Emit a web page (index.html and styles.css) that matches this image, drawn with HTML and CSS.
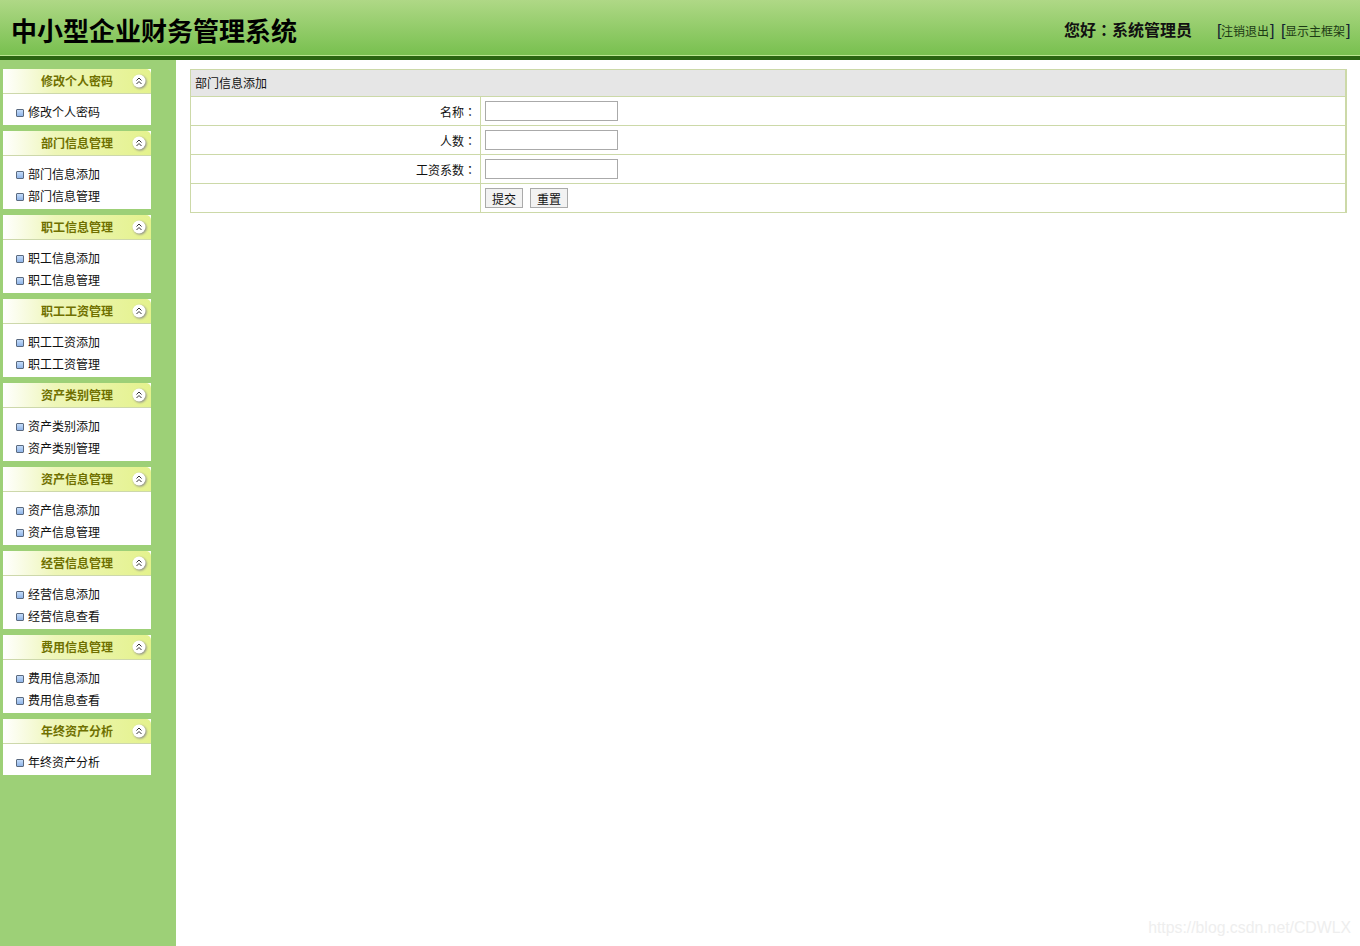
FILE: index.html
```html
<!DOCTYPE html>
<html lang="zh-CN">
<head>
<meta charset="utf-8">
<title>中小型企业财务管理系统</title>
<link rel="stylesheet" href="styles.css">
</head>
<body>
<header class="top">
  <h1 class="title">中小型企业财务管理系统</h1>
  <div class="greet">您好<span class="colon" lang="zh-TW">：</span>系统管理员</div>
  <div class="links"><span class="br">[</span><a>注销退出</a><span class="br br-end">]</span><span class="br br-gap">[</span><a>显示主框架</a><span class="br br-end">]</span></div>
</header>
<div class="main">
  <aside class="side">
    <section class="panel"><div class="phead"><span class="ptitle">修改个人密码</span><svg class="tog" viewBox="0 0 14 14"><circle cx="7" cy="7" r="6.500" fill="#fff"/><path d="M4.500 6.500 7 4l2.500 2.500M4.500 10 7 7.500l2.500 2.500" fill="none" stroke="#333" stroke-width="1"/></svg></div><ul class="pbody"><li>修改个人密码</li></ul></section>
    <section class="panel"><div class="phead"><span class="ptitle">部门信息管理</span><svg class="tog" viewBox="0 0 14 14"><circle cx="7" cy="7" r="6.500" fill="#fff"/><path d="M4.500 6.500 7 4l2.500 2.500M4.500 10 7 7.500l2.500 2.500" fill="none" stroke="#333" stroke-width="1"/></svg></div><ul class="pbody"><li>部门信息添加</li><li>部门信息管理</li></ul></section>
    <section class="panel"><div class="phead"><span class="ptitle">职工信息管理</span><svg class="tog" viewBox="0 0 14 14"><circle cx="7" cy="7" r="6.500" fill="#fff"/><path d="M4.500 6.500 7 4l2.500 2.500M4.500 10 7 7.500l2.500 2.500" fill="none" stroke="#333" stroke-width="1"/></svg></div><ul class="pbody"><li>职工信息添加</li><li>职工信息管理</li></ul></section>
    <section class="panel"><div class="phead"><span class="ptitle">职工工资管理</span><svg class="tog" viewBox="0 0 14 14"><circle cx="7" cy="7" r="6.500" fill="#fff"/><path d="M4.500 6.500 7 4l2.500 2.500M4.500 10 7 7.500l2.500 2.500" fill="none" stroke="#333" stroke-width="1"/></svg></div><ul class="pbody"><li>职工工资添加</li><li>职工工资管理</li></ul></section>
    <section class="panel"><div class="phead"><span class="ptitle">资产类别管理</span><svg class="tog" viewBox="0 0 14 14"><circle cx="7" cy="7" r="6.500" fill="#fff"/><path d="M4.500 6.500 7 4l2.500 2.500M4.500 10 7 7.500l2.500 2.500" fill="none" stroke="#333" stroke-width="1"/></svg></div><ul class="pbody"><li>资产类别添加</li><li>资产类别管理</li></ul></section>
    <section class="panel"><div class="phead"><span class="ptitle">资产信息管理</span><svg class="tog" viewBox="0 0 14 14"><circle cx="7" cy="7" r="6.500" fill="#fff"/><path d="M4.500 6.500 7 4l2.500 2.500M4.500 10 7 7.500l2.500 2.500" fill="none" stroke="#333" stroke-width="1"/></svg></div><ul class="pbody"><li>资产信息添加</li><li>资产信息管理</li></ul></section>
    <section class="panel"><div class="phead"><span class="ptitle">经营信息管理</span><svg class="tog" viewBox="0 0 14 14"><circle cx="7" cy="7" r="6.500" fill="#fff"/><path d="M4.500 6.500 7 4l2.500 2.500M4.500 10 7 7.500l2.500 2.500" fill="none" stroke="#333" stroke-width="1"/></svg></div><ul class="pbody"><li>经营信息添加</li><li>经营信息查看</li></ul></section>
    <section class="panel"><div class="phead"><span class="ptitle">费用信息管理</span><svg class="tog" viewBox="0 0 14 14"><circle cx="7" cy="7" r="6.500" fill="#fff"/><path d="M4.500 6.500 7 4l2.500 2.500M4.500 10 7 7.500l2.500 2.500" fill="none" stroke="#333" stroke-width="1"/></svg></div><ul class="pbody"><li>费用信息添加</li><li>费用信息查看</li></ul></section>
    <section class="panel"><div class="phead"><span class="ptitle">年终资产分析</span><svg class="tog" viewBox="0 0 14 14"><circle cx="7" cy="7" r="6.500" fill="#fff"/><path d="M4.500 6.500 7 4l2.500 2.500M4.500 10 7 7.500l2.500 2.500" fill="none" stroke="#333" stroke-width="1"/></svg></div><ul class="pbody"><li>年终资产分析</li></ul></section>
  </aside>
  <main class="content">
    <div class="form">
      <div class="fhead">部门信息添加</div>
      <div class="row"><div class="lab">名称<span class="colon" lang="zh-TW">：</span></div><div class="val"><span class="inp"></span></div></div>
      <div class="row"><div class="lab">人数<span class="colon" lang="zh-TW">：</span></div><div class="val"><span class="inp"></span></div></div>
      <div class="row"><div class="lab">工资系数<span class="colon" lang="zh-TW">：</span></div><div class="val"><span class="inp"></span></div></div>
      <div class="row"><div class="lab"></div><div class="val"><span class="btn">提交</span><span class="btn">重置</span></div></div>
    </div>
  </main>
</div>
<div class="mark">https://blog.csdn.net/CDWLX</div>
</body>
</html>
```
FILE: styles.css
```css
* { box-sizing: border-box; }
html, body { margin: 0; height: 946px; overflow: hidden; }
body { font-family: "Noto Sans CJK SC", "Liberation Sans", sans-serif; font-size: 12px; color: #111; background: #fff; position: relative; }
.colon { font-family: "Noto Sans CJK TC", "Noto Sans CJK SC", sans-serif; }
.top { height: 60px; display: flex; align-items: center; padding: 3px 10px 0 11px; background: linear-gradient(#afd886 0, #78c04f 55px); border-bottom: 4px solid #2a6511; box-shadow: inset 0 -1px 0 #b9e58f; }
.title { margin: 0; flex: 1; font-size: 26px; line-height: 36px; font-weight: 700; color: #000; }
.greet { font-size: 16px; font-weight: 700; color: #111; line-height: 22px; margin: 0 25px 2px 0; }
.links { display: flex; align-items: center; margin-top: 2px; font-size: 12px; line-height: 20px; color: #1c3a14; white-space: nowrap; }
.br { width: 4px; font-size: 16px; font-family: "Liberation Sans", sans-serif; font-weight: 400; color: #123; }
.br-end { margin-left: 1px; }
.br-gap { margin-left: 7px; }
.main { display: flex; height: 886px; }
.side { width: 176px; background: #9dd077; padding: 9px 25px 0 3px; flex: none; }
.panel { margin-bottom: 6px; background: #fff; }
.phead { height: 25px; position: relative; display: flex; align-items: center; justify-content: center; border-bottom: 1px solid #cdd8ab; border-radius: 5px 5px 0 0; background: linear-gradient(90deg, #fff 0, #eef6b8 35%, #e4f28d 100%); }
.ptitle { font-size: 12px; font-weight: 700; color: #6f7000; line-height: 24px; }
.tog { position: absolute; right: 5px; top: 5px; width: 14px; height: 14px; filter: drop-shadow(1px 1px 1px #888); }
.pbody { list-style: none; margin: 0; padding: 7px 0 2px 25px; }
.pbody li { position: relative; height: 22px; line-height: 22px; font-size: 12px; color: #111; }
.pbody li::before { content: ""; position: absolute; left: -12px; top: 8px; width: 6px; height: 6px; border: 1px solid #5a6a80; border-radius: 1px; background: linear-gradient(#c4dcfa, #8fb4e8); }
.content { flex: 1; padding: 9px 13px 0 14px; }
.form { border: 1px solid #ccd9a8; border-width: 1px 2px 1px 1px; }
.fhead { height: 27px; line-height: 26px; padding-left: 4px; background: #e6e6e6; border-bottom: 1px solid #ccd9a8; font-size: 12px; color: #111; }
.row { height: 29px; display: flex; border-bottom: 1px solid #ccd9a8; }
.row:last-child { height: 28px; border-bottom: 0; }
.lab { width: 290px; border-right: 1px solid #ccd9a8; text-align: right; padding-right: 4px; line-height: 30px; flex: none; }
.val { flex: 1; display: flex; align-items: flex-start; padding: 4px 0 0 4px; }
.inp { display: block; width: 133px; height: 20px; border: 1px solid #aaa; background: #fff; }
.btn { display: block; width: 38px; height: 20px; line-height: 19px; text-align: center; border: 1px solid #aaa; background: #f2f2f2; color: #111; margin-right: 7px; }
.mark { position: absolute; right: 9px; top: 916px; font-family: "Liberation Sans", sans-serif; font-size: 15.800px; line-height: 24px; color: #eeeeee; }
```
